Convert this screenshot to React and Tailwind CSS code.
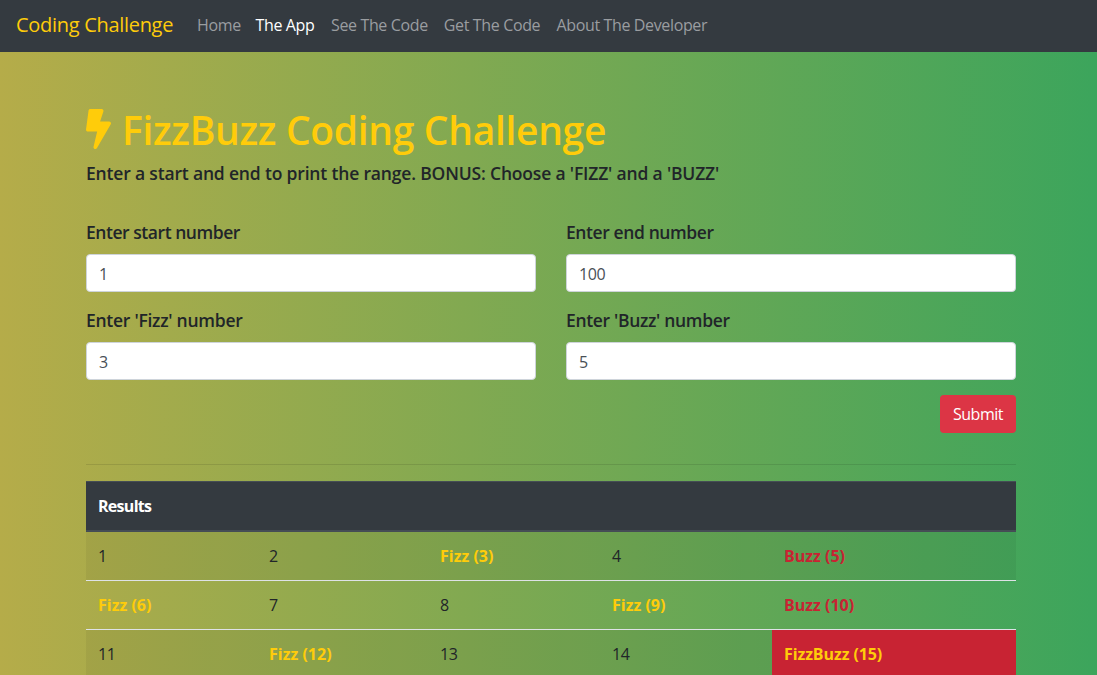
import React from "react";

const links = [
  { label: "Home", width: "w-[42.5px]" },
  { label: "The App", width: "w-[59.5px]", active: true },
  { label: "See The Code", width: "w-[96.8px]" },
  { label: "Get The Code", width: "w-[96.7px]" },
  { label: "About The Developer", width: "w-[152px]" },
];

const fields = [
  { id: "start", label: "Enter start number", value: "1", tracking: "tracking-[-0.45px]" },
  { id: "end", label: "Enter end number", value: "100", tracking: "tracking-[-0.4px]" },
  { id: "fizz", label: "Enter 'Fizz' number", value: "3", tracking: "tracking-[-0.26px]" },
  { id: "buzz", label: "Enter 'Buzz' number", value: "5", tracking: "tracking-[-0.32px]" },
];

const rows = [0, 1, 2].map((r) => [1, 2, 3, 4, 5].map((c) => r * 5 + c));

function Navbar() {
  return (
    <nav className="flex h-[52px] items-center bg-[#343a40] px-4 pb-0.5">
      <a className="mr-4 w-[157px] whitespace-nowrap text-xl leading-[30px] tracking-[-0.3px] text-[#ffcc0a]">
        Coding Challenge
      </a>
      <ul className="flex gap-4">
        {links.map(({ label, width, active }) => (
          <li
            key={label}
            className={`${width} whitespace-nowrap text-base tracking-[-0.36px] ${
              active ? "text-white" : "text-[#9a9da0]"
            } ${label === "Home" ? "ml-2" : ""}`}
          >
            {label}
          </li>
        ))}
      </ul>
    </nav>
  );
}

function Cell({ n }) {
  const fizz = n % 3 === 0;
  const buzz = n % 5 === 0;
  if (fizz && buzz)
    return (
      <td className="bg-[#c82333] bg-clip-padding px-3 py-3 font-bold tracking-[-0.1px] text-[#ffcc0a]">
        FizzBuzz ({n})
      </td>
    );
  if (fizz) return <td className="px-3 py-3 font-bold text-[#ffcc0a]">Fizz ({n})</td>;
  if (buzz) return <td className="px-3 py-3 font-bold text-[#c82333]">Buzz ({n})</td>;
  return <td className="px-3 py-3 tracking-[-0.4px]">{n}</td>;
}

export default function App() {
  return (
    <div className="h-[675px] overflow-hidden bg-[linear-gradient(to_right,#b5ac49,#3ca55c)] font-['Open_Sans',sans-serif] text-base text-[#212529]">
      <Navbar />
      <main className="ml-[86px] w-[930px] pt-[53px]">
        <h1 className="flex h-12 items-center text-[39px] font-semibold leading-[48px] tracking-[-0.33px] text-[#ffcc0a]">
          <svg viewBox="0 0 320 512" className="mr-[11px] h-10 w-[25px] shrink-0" fill="currentColor" aria-hidden="true">
            <path d="M296 160H180.6l42.6-129.8C227.2 15 215.7 0 200 0H56C44 0 33.8 8.9 32.2 20.8l-32 240C-1.7 275.2 9.5 288 24 288h118.7L96.6 482.5c-3.6 15.2 8 29.5 23.3 29.5 8.4 0 16.4-4.4 20.8-12l176-304c9.3-15.9-2.2-36-20.7-36z" />
          </svg>
          <span className="whitespace-nowrap pt-0.5">FizzBuzz Coding Challenge</span>
        </h1>
        <p className="mt-2 h-6 whitespace-nowrap text-[17.5px] font-semibold leading-6 tracking-[-0.17px]">
          Enter a start and end to print the range. BONUS: Choose a 'FIZZ' and a 'BUZZ'
        </p>
        <form className="mt-9">
          <div className="grid grid-cols-2 gap-x-[30px] gap-y-[17px]">
            {fields.map(({ id, label, value, tracking }) => (
              <div key={id}>
                <label htmlFor={id} className={`block h-[33px] text-[17.5px] font-semibold leading-[22px] ${tracking}`}>
                  {label}
                </label>
                <input
                  id={id}
                  defaultValue={value}
                  className="block h-[38px] w-full rounded border border-[#ced4da] bg-white px-3 pb-1.5 pt-[7px] leading-6 tracking-[-0.4px] text-[#495057]"
                />
              </div>
            ))}
          </div>
          <div className="mt-[15px] flex justify-end">
            <button type="button" className="h-[38px] w-[76px] rounded bg-[#dc3545] tracking-[-0.45px] text-white">
              Submit
            </button>
          </div>
        </form>
        <hr className="mb-4 mt-[31px] border-t border-black/10" />
        <table className="w-full table-fixed border-separate border-spacing-0 text-left leading-6">
          <colgroup>
            <col className="w-[171px]" />
            <col className="w-[171px]" />
            <col className="w-[172px]" />
            <col className="w-[172px]" />
            <col className="w-[244px]" />
          </colgroup>
          <thead>
            <tr>
              <th colSpan={5} className="border-b-2 border-t border-[#454d55] bg-[#343a40] p-3 font-bold tracking-[-0.7px] text-white">
                Results
              </th>
            </tr>
          </thead>
          <tbody className="[&>tr:nth-child(odd)]:bg-black/5 [&>tr:not(:first-child)>td]:border-t [&>tr>td]:border-[#dee2e6]">
            {rows.map((row) => (
              <tr key={row[0]}>
                {row.map((n) => (
                  <Cell key={n} n={n} />
                ))}
              </tr>
            ))}
          </tbody>
        </table>
      </main>
    </div>
  );
}
